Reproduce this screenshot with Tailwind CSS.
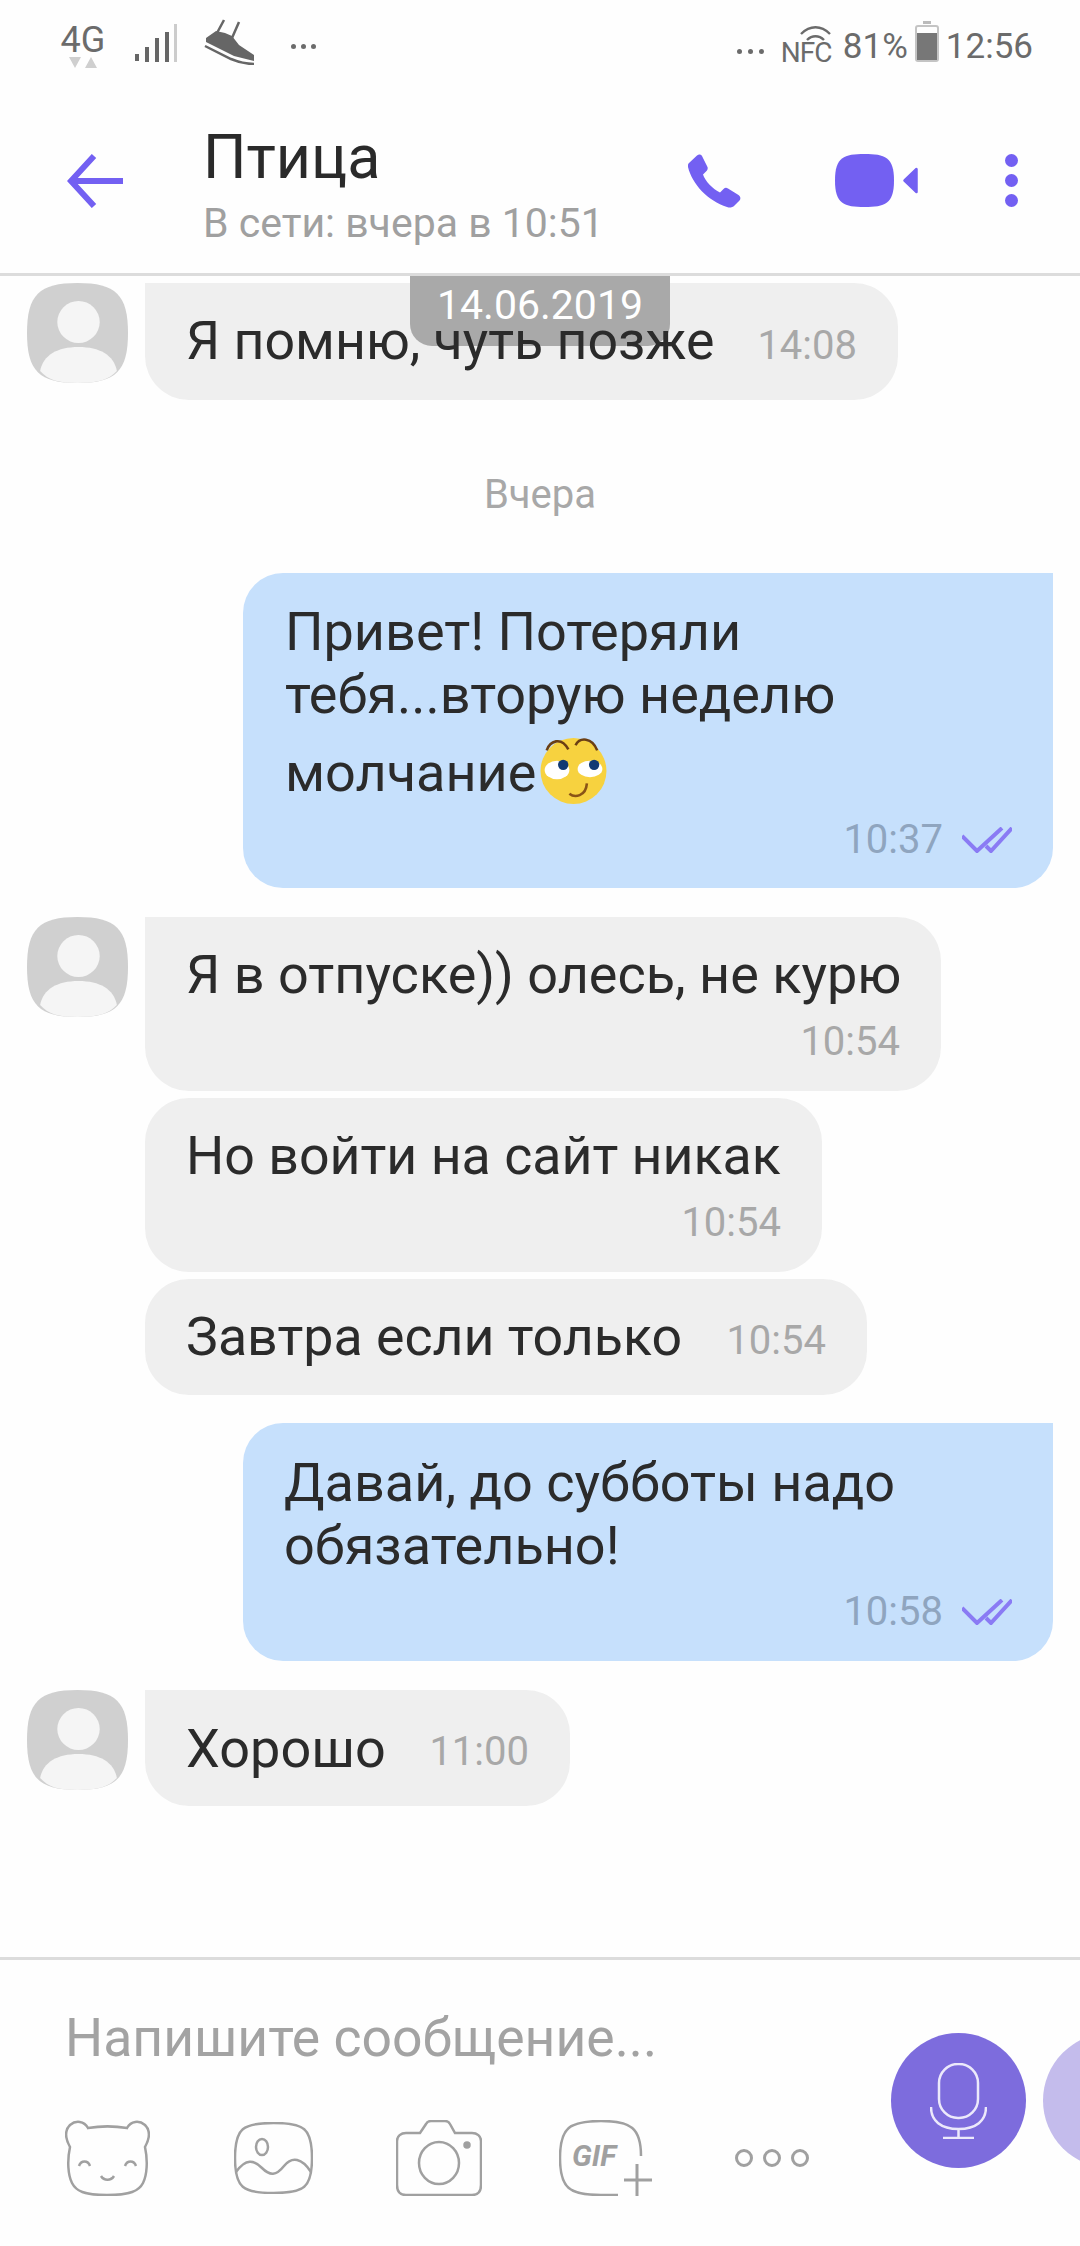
<!DOCTYPE html>
<html lang="ru">
<head>
  <meta charset="UTF-8" />
  <title>Птица</title>
  <script src="https://cdn.jsdelivr.net/npm/@tailwindcss/browser@4"></script>
</head>
<body class="bg-white">
<div class="relative w-[1080px] h-[2246px] overflow-hidden bg-[#fefefe] font-['Roboto',sans-serif] text-[#2b2b2b] flex flex-col">

  <!-- status bar -->
  <div class="h-[80px] flex items-center justify-between pl-[60px] pr-[47px] text-[#6b6b6b] shrink-0">
    <div class="flex items-center">
      <div class="w-[46px] flex flex-col items-center mt-[12px]">
        <span class="text-[36px] leading-[30px]">4G</span>
        <svg class="w-[28px] h-[11px] mt-[2px]" viewBox="0 0 28 11"><path d="M0 0h12L6 11zM16 11l6-11 6 11z" fill="#cfcfcf"/></svg>
      </div>
      <svg class="ml-[29px] mt-[6px] w-[44px] h-[38px]" viewBox="0 0 44 38"><rect x="0" y="30" width="4" height="7" fill="#666"/><rect x="10" y="23" width="4" height="15" fill="#666"/><rect x="20" y="14" width="4" height="24" fill="#666"/><rect x="30" y="8" width="4" height="30" fill="#666"/><rect x="39" y="0" width="3" height="38" fill="#ccc"/></svg>
      <svg class="ml-[25px] mt-[4px] w-[52px] h-[46px]" viewBox="0 0 52 46" fill="none"><path d="M20 1l-7 13M35 3l-7 16" stroke="#666" stroke-width="2.500"/><path d="M2 19l10-7 9 2 7 3 7 9 15 10v6L30 37 2 23z" fill="#666"/><path d="M1 27l26 13c7 3 15 5 23 5" stroke="#666" stroke-width="2.500"/></svg>
      <div class="ml-[35px] mt-[12px] flex gap-[5px]">
        <div class="w-[5px] h-[5px] rounded-full bg-[#6b6b6b]"></div>
        <div class="w-[5px] h-[5px] rounded-full bg-[#6b6b6b]"></div>
        <div class="w-[5px] h-[5px] rounded-full bg-[#6b6b6b]"></div>
      </div>
    </div>
    <div class="flex items-center">
      <div class="mt-[22px] flex gap-[6px]">
        <div class="w-[5px] h-[5px] rounded-full bg-[#6b6b6b]"></div>
        <div class="w-[5px] h-[5px] rounded-full bg-[#6b6b6b]"></div>
        <div class="w-[5px] h-[5px] rounded-full bg-[#6b6b6b]"></div>
      </div>
      <div class="ml-[17px] mt-[8px] relative w-[50px] h-[38px]">
        <svg class="absolute left-[19px] top-0 w-[31px] h-[16px]" viewBox="0 0 31 16" fill="none" stroke="#6b6b6b" stroke-width="2.400"><path d="M1 9c9-9 20-9 29 0M7 15c5-5 12-5 17 0"/></svg>
        <span class="absolute left-0 top-[14px] text-[28px] leading-[28px] tracking-[-1px]">NFC</span>
      </div>
      <span class="ml-[12px] mt-[14px] text-[35px] leading-[40px]">81%</span>
      <div class="ml-[7px] mt-[6px] relative w-[24px] h-[37px] border-[2px] border-[#c4c4c4] rounded-[3px] flex items-end">
        <div class="absolute -top-[6px] left-[6px] w-[8px] h-[3px] bg-[#bbb]"></div>
        <div class="w-full h-[27px] bg-[#777]"></div>
      </div>
      <span class="ml-[7px] mt-[14px] text-[35px] leading-[40px]">12:56</span>
    </div>
  </div>

  <!-- header -->
  <div class="h-[196px] shrink-0 border-b-[3px] border-[#dcdcdc] flex items-center pt-[8px] pl-[67px] pr-[62px]">
    <svg class="w-[56px] h-[54px] shrink-0" viewBox="0 0 56 54" fill="none" stroke="#7360f2" stroke-width="6"><path d="M27 2L4 27l23 25M4 27h52"/></svg>
    <div class="ml-[80px] flex-1 mt-[19px]">
      <div class="text-[61px] leading-[66px] text-[#2a2a2a]">Птица</div>
      <div class="text-[41px] leading-[66px] text-[#a0a0a0]">В сети: вчера в 10:51</div>
    </div>
    <svg class="w-[53px] h-[54px] shrink-0" viewBox="0 0 53 54"><path d="M1 9L9 1.500C11 0 13 .5 14 2L19.500 13C20 14.500 19.500 16 18.500 17L15 20.500C17 27 25 35 32 38.500L35.500 35C37 33.500 38.500 33.500 40 34.500L50.500 41C52.500 42.500 53 44.500 51.500 46.500L46 52C44 53.500 42 54 39 53C20 47 4 30 0 13C-.3 11.500 0 10 1 9Z" fill="#7360f2"/></svg>
    <svg class="ml-[94px] w-[59px] h-[53px] shrink-0" viewBox="0 0 59 53"><path d="M29.500 0C50 0 59 3 59 26.500S50 53 29.500 53 0 50 0 26.500 9 0 29.500 0z" fill="#7360f2"/></svg>
    <svg class="ml-[9px] w-[15px] h-[27px] shrink-0" viewBox="0 0 15 27"><path d="M13.500 2v23L1.500 13.500z" fill="#7360f2" stroke="#7360f2" stroke-width="2.500" stroke-linejoin="round"/></svg>
    <div class="ml-[87px] flex flex-col gap-[7px] shrink-0">
      <div class="w-[13px] h-[13px] rounded-full bg-[#7360f2]"></div>
      <div class="w-[13px] h-[13px] rounded-full bg-[#7360f2]"></div>
      <div class="w-[13px] h-[13px] rounded-full bg-[#7360f2]"></div>
    </div>
  </div>

  <!-- date chip over the bubbles, message text stays on top of it -->
  <div class="absolute left-[410px] top-[276px] w-[260px] h-[70px] bg-[#a9a9a9] rounded-b-[22px] flex items-start justify-center text-white text-[41px] leading-[58px]">14.06.2019</div>

  <!-- messages -->
  <div class="flex-1 flex flex-col pt-[7px]">
    <div class="flex pl-[27px]">
      <svg class="w-[101px] h-[100px] shrink-0" viewBox="0 0 100 100" preserveAspectRatio="none"><path d="M50 0C88 0 100 12 100 50S88 100 50 100 0 88 0 50 12 0 50 0z" fill="#d0d0d0"/><circle cx="51" cy="39" r="21" fill="#f5f5f5"/><path d="M13 88C16 72 30 64 51 64s35 8 38 24c-8 9-20 12-39 12s-29-3-37-12z" fill="#f5f5f5"/></svg>
      <div class="ml-[17px] w-[753px] h-[117px] bg-[#efefef] rounded-[44px] rounded-tl-none pl-[41px] pr-[41px] flex items-center justify-between">
        <span class="relative z-10 text-[53.700px]">Я помню, чуть позже</span>
        <span class="text-[40px] text-[#a8a8a8] mt-[8px]">14:08</span>
      </div>
    </div>

    <div class="mt-[68px] text-center text-[40px] leading-[54px] text-[#a8a8a8]">Вчера</div>

    <div class="mt-[51px] ml-[243px] w-[810px] h-[315px] bg-[#c6e0fc] rounded-[40px] rounded-tr-none pl-[42px] pr-[40px] pt-[27px] relative">
      <div class="text-[54px] leading-[63px]">Привет! Потеряли<br>тебя...вторую неделю</div>
      <div class="text-[54px] leading-[80px] flex items-center mt-[7px]">молчание
        <svg class="w-[67px] h-[67px] -mt-[6px] ml-[4px]" viewBox="0 0 64 65"><ellipse cx="32" cy="33" rx="32" ry="32" fill="#f7d23f"/><path d="M6 13C9 4 20-1 27 12M34 8C38 0 50 0 55 13" fill="none" stroke="#6b3f14" stroke-width="2.500"/><ellipse cx="16" cy="32" rx="12" ry="9" fill="#fff"/><ellipse cx="48" cy="31" rx="12" ry="8" fill="#fff"/><circle cx="22" cy="27" r="5" fill="#123a73"/><circle cx="52" cy="27" r="5" fill="#123a73"/><path d="M28 55c5 4 16 3 17-10" fill="none" stroke="#8a5416" stroke-width="2.500"/></svg>
      </div>
      <div class="absolute right-[41px] bottom-[25px] flex items-center">
        <span class="text-[40px] leading-[46px] text-[#8fa5bf]">10:37</span>
        <svg class="ml-[19px] w-[50px] h-[26px]" viewBox="0 0 50 26" fill="none" stroke="#8a7bf4" stroke-width="4"><path d="M0 9l15 15L40 1M24 19l5 5L50 1"/></svg>
      </div>
    </div>

    <div class="mt-[29px] flex pl-[27px]">
      <svg class="w-[101px] h-[100px] shrink-0" viewBox="0 0 100 100" preserveAspectRatio="none"><path d="M50 0C88 0 100 12 100 50S88 100 50 100 0 88 0 50 12 0 50 0z" fill="#d0d0d0"/><circle cx="51" cy="39" r="21" fill="#f5f5f5"/><path d="M13 88C16 72 30 64 51 64s35 8 38 24c-8 9-20 12-39 12s-29-3-37-12z" fill="#f5f5f5"/></svg>
      <div class="ml-[17px] w-[796px] h-[174px] bg-[#efefef] rounded-[44px] rounded-tl-none pl-[41px] pr-[41px] pt-[26px]">
        <div class="text-[54px] leading-[64px] whitespace-nowrap">Я в отпуске)) олесь, не курю</div>
        <div class="text-[40px] leading-[70px] text-right text-[#a8a8a8]">10:54</div>
      </div>
    </div>

    <div class="mt-[7px] ml-[145px] w-[677px] h-[174px] bg-[#efefef] rounded-[44px] pl-[41px] pr-[41px] pt-[26px]">
      <div class="text-[53.700px] leading-[64px] whitespace-nowrap">Но войти на сайт никак</div>
      <div class="text-[40px] leading-[70px] text-right text-[#a8a8a8]">10:54</div>
    </div>

    <div class="mt-[7px] ml-[145px] w-[722px] h-[116px] bg-[#efefef] rounded-[44px] pl-[41px] pr-[41px] flex items-center justify-between">
      <span class="text-[53.700px]">Завтра если только</span>
      <span class="text-[40px] text-[#a8a8a8] mt-[8px]">10:54</span>
    </div>

    <div class="mt-[28px] ml-[243px] w-[810px] h-[238px] bg-[#c6e0fc] rounded-[40px] rounded-tr-none pl-[41px] pr-[40px] pt-[28px] relative">
      <div class="text-[54px] leading-[63px]">Давай, до субботы надо<br>обязательно!</div>
      <div class="absolute right-[41px] bottom-[26px] flex items-center">
        <span class="text-[40px] leading-[46px] text-[#8fa5bf]">10:58</span>
        <svg class="ml-[19px] w-[50px] h-[26px]" viewBox="0 0 50 26" fill="none" stroke="#8a7bf4" stroke-width="4"><path d="M0 9l15 15L40 1M24 19l5 5L50 1"/></svg>
      </div>
    </div>

    <div class="mt-[29px] flex pl-[27px]">
      <svg class="w-[101px] h-[100px] shrink-0" viewBox="0 0 100 100" preserveAspectRatio="none"><path d="M50 0C88 0 100 12 100 50S88 100 50 100 0 88 0 50 12 0 50 0z" fill="#d0d0d0"/><circle cx="51" cy="39" r="21" fill="#f5f5f5"/><path d="M13 88C16 72 30 64 51 64s35 8 38 24c-8 9-20 12-39 12s-29-3-37-12z" fill="#f5f5f5"/></svg>
      <div class="ml-[17px] w-[425px] h-[116px] bg-[#efefef] rounded-[44px] rounded-tl-none pl-[41px] pr-[41px] flex items-center justify-between">
        <span class="text-[54px]">Хорошо</span>
        <span class="text-[40px] text-[#a8a8a8] mt-[8px]">11:00</span>
      </div>
    </div>
  </div>

  <!-- composer -->
  <div class="h-[289px] shrink-0 border-t-[3px] border-[#dcdcdc] flex pl-[65px]">
    <div class="w-[826px] shrink-0">
      <div class="mt-[49px] text-[53.500px] leading-[58px] text-[#a3a3a3]">Напишите сообщение...</div>
      <div class="mt-[53px] flex items-center">
        <svg class="w-[85px] h-[76px] shrink-0" viewBox="0 0 85 76" fill="none" stroke="#a0a0a0" stroke-width="2.500"><path d="M5 27C0 18 0 10 5 5c6-5 14-4 18 3 12-2 27-2 39 0 4-7 12-8 18-3 5 5 5 13 0 22 3 14 2 28-2 36-4 8-13 12-36 12S11 71 7 63C3 55 2 41 5 27z"/><path d="M14 46c2-6 9-6 11 0M60 46c2-6 9-6 11 0M36 56c3 5 10 5 13 0"/></svg>
        <svg class="ml-[84px] w-[79px] h-[72px] shrink-0" viewBox="0 0 79 72" fill="none" stroke="#a0a0a0" stroke-width="2.500"><path d="M39.500 1C70 1 78 6 78 36S70 71 39.500 71 1 66 1 36 9 1 39.500 1z"/><ellipse cx="28" cy="25" rx="6" ry="8"/><path d="M2 50c10-14 18-12 26-4 8 8 14 8 22-2 8-10 18-8 27 6"/></svg>
        <svg class="ml-[83px] w-[86px] h-[76px] shrink-0" viewBox="0 0 86 76" fill="none" stroke="#a0a0a0" stroke-width="2.500"><path d="M10 13h14l6-9c1-2 3-3 5-3h14c2 0 4 1 5 3l5 9h17c5 0 9 3 9 8v44c0 7-3 10-9 10H10c-6 0-9-3-9-10V21c0-5 4-8 9-8z"/><ellipse cx="43" cy="43" rx="20" ry="21"/><circle cx="71" cy="25" r="2.500" fill="#a0a0a0"/></svg>
        <div class="ml-[77px] relative w-[93px] h-[76px] shrink-0">
          <svg class="absolute inset-0 w-[93px] h-[76px]" viewBox="0 0 93 76" fill="none" stroke="#a0a0a0" stroke-width="2.500"><path d="M82 36C82 8 72 1 42 1 10 1 1 8 1 38s9 37 41 37h17"/><path d="M78 44v32M65 60h28" stroke-width="3"/></svg>
          <span class="absolute left-[13px] top-[18px] text-[30px] leading-[36px] font-bold italic text-[#a0a0a0]">GIF</span>
        </div>
        <svg class="ml-[83px] w-[74px] h-[20px] shrink-0" viewBox="0 0 74 20" fill="none" stroke="#a0a0a0" stroke-width="3"><circle cx="9" cy="10" r="7.500"/><circle cx="37" cy="10" r="7.500"/><circle cx="65" cy="10" r="7.500"/></svg>
      </div>
    </div>
    <div class="w-[135px] h-[135px] mt-[73px] rounded-full bg-[#7d6cdd] flex items-center justify-center shrink-0">
      <svg class="w-[57px] h-[76px]" viewBox="0 0 57 76" fill="none" stroke="#ece9fb" stroke-width="2.500"><rect x="9" y="1" width="39" height="54" rx="19"/><path d="M1 44c0 14 10 22 27.500 22S56 58 56 44M28.500 66v9M13 75h31"/></svg>
    </div>
    <div class="ml-[17px] w-[135px] h-[135px] mt-[73px] rounded-full bg-[#c4bcec] shrink-0"></div>
  </div>
</div>
</body>
</html>
